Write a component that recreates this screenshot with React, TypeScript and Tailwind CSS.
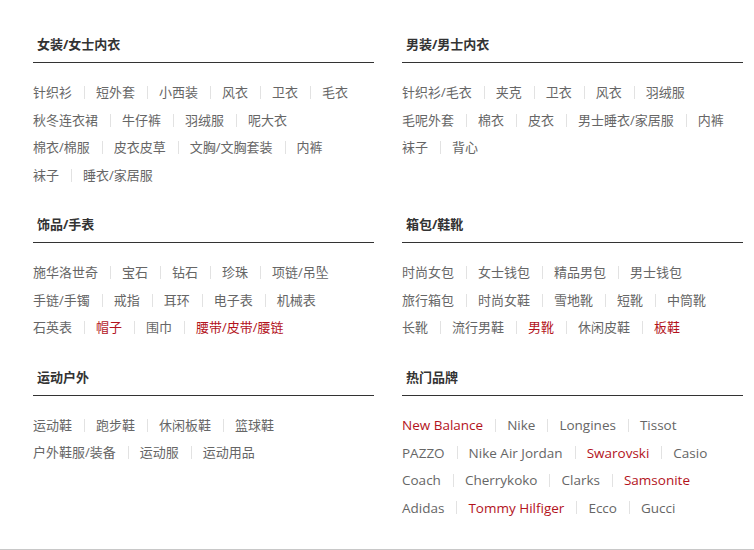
import React from "react";

type Item = { name: string; hot?: boolean };
type Section = { title: string; rows: Item[][]; latin?: boolean };

const t = (s: string): Item[] =>
    s.split(" ").map(n => (n.startsWith("*") ? { name: n.slice(1), hot: true } : { name: n }));

const sections: Section[][] = [
    [
        {
            title: "女装/女士内衣",
            rows: [
                t("针织衫 短外套 小西装 风衣 卫衣 毛衣"),
                t("秋冬连衣裙 牛仔裤 羽绒服 呢大衣"),
                t("棉衣/棉服 皮衣皮草 文胸/文胸套装 内裤"),
                t("袜子 睡衣/家居服"),
            ],
        },
        {
            title: "男装/男士内衣",
            rows: [
                t("针织衫/毛衣 夹克 卫衣 风衣 羽绒服"),
                t("毛呢外套 棉衣 皮衣 男士睡衣/家居服 内裤"),
                t("袜子 背心"),
            ],
        },
    ],
    [
        {
            title: "饰品/手表",
            rows: [
                t("施华洛世奇 宝石 钻石 珍珠 项链/吊坠"),
                t("手链/手镯 戒指 耳环 电子表 机械表"),
                t("石英表 *帽子 围巾 *腰带/皮带/腰链"),
            ],
        },
        {
            title: "箱包/鞋靴",
            rows: [
                t("时尚女包 女士钱包 精品男包 男士钱包"),
                t("旅行箱包 时尚女鞋 雪地靴 短靴 中筒靴"),
                t("长靴 流行男鞋 *男靴 休闲皮鞋 *板鞋"),
            ],
        },
    ],
    [
        {
            title: "运动户外",
            rows: [t("运动鞋 跑步鞋 休闲板鞋 篮球鞋"), t("户外鞋服/装备 运动服 运动用品")],
        },
        {
            title: "热门品牌",
            latin: true,
            rows: [
                [{ name: "New Balance", hot: true }, { name: "Nike" }, { name: "Longines" }, { name: "Tissot" }],
                [{ name: "PAZZO" }, { name: "Nike Air Jordan" }, { name: "Swarovski", hot: true }, { name: "Casio" }],
                [{ name: "Coach" }, { name: "Cherrykoko" }, { name: "Clarks" }, { name: "Samsonite", hot: true }],
                [{ name: "Adidas" }, { name: "Tommy Hilfiger", hot: true }, { name: "Ecco" }, { name: "Gucci" }],
            ],
        },
    ],
];

function Block({ section }: { section: Section }) {
    return (
        <div>
            <h3 className="leading-[36px] pl-1 text-[13px] font-bold text-[#333] border-b border-[#333]">
                {section.title}
            </h3>
            <div className="pt-4">
                {section.rows.map((row, i) => (
                    <div
                        key={i}
                        className={`flex items-center h-[27.5px] whitespace-nowrap ${section.latin ? "text-[13.5px]" : "text-[13px]"}`}
                    >
                        {row.map((item, j) => (
                            <React.Fragment key={item.name}>
                                {j > 0 && <span className="w-px h-[13px] bg-[#e2e2e2] ml-3 mr-[11px]" />}
                                <a className={item.hot ? "text-[#b3131c]" : "text-[#666]"}>{item.name}</a>
                            </React.Fragment>
                        ))}
                    </div>
                ))}
            </div>
        </div>
    );
}

export default function App() {
    return (
        <div
            className="w-[754px] h-[550px] bg-white border-b border-[#c8c8c8] pt-[26px] pl-[33px]"
            style={{ fontFamily: '"Open Sans", "Noto Sans CJK SC", sans-serif' }}
        >
            {sections.map((pair, i) => (
                <div key={i} className="grid grid-cols-[341px_341px] gap-x-[28px] mb-[17px]">
                    {pair.map(s => (
                        <Block key={s.title} section={s} />
                    ))}
                </div>
            ))}
        </div>
    );
}
